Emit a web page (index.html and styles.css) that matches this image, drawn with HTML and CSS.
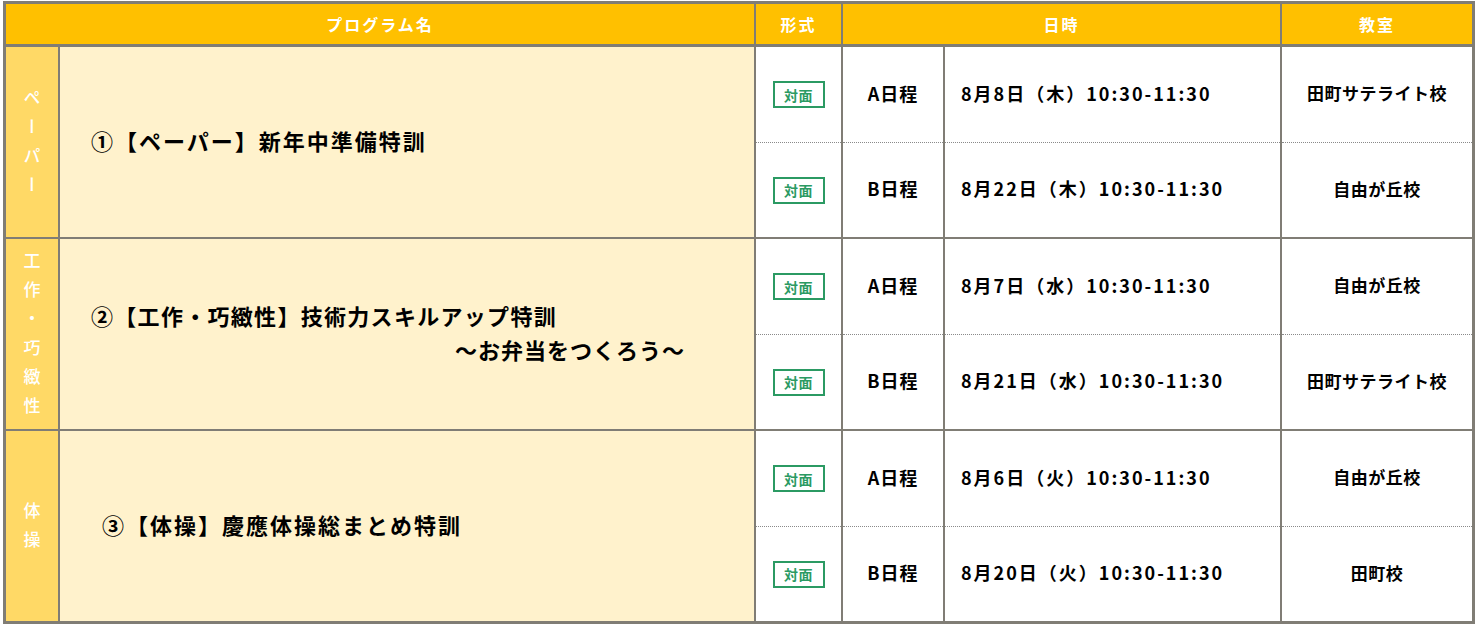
FILE: index.html
```html
<!DOCTYPE html>
<html lang="ja">
<head>
<meta charset="utf-8">
<title>特訓プログラム</title>
<link rel="stylesheet" href="styles.css">
</head>
<body>
<div class="schedule">
  <div class="hd hd-name">プログラム名</div>
  <div class="hd">形式</div>
  <div class="hd hd-date">日時</div>
  <div class="hd">教室</div>

  <div class="cat"><span class="cat-text">ペーパー</span></div>
  <div class="prog prog-1"><p class="title">①【ペーパー】新年中準備特訓</p></div>
  <div class="col"><div class="half"><span class="badge">対面</span></div><div class="half"><span class="badge">対面</span></div></div>
  <div class="col label"><div class="half">A日程</div><div class="half">B日程</div></div>
  <div class="col date"><div class="half">8月8日（木）10:30-11:30</div><div class="half">8月22日（木）10:30-11:30</div></div>
  <div class="col room"><div class="half">田町サテライト校</div><div class="half">自由が丘校</div></div>

  <div class="cat"><span class="cat-text">工作・巧緻性</span></div>
  <div class="prog prog-2"><p class="title title-long">②【工作・巧緻性】技術力スキルアップ特訓</p><p class="title sub">〜お弁当をつくろう〜</p></div>
  <div class="col"><div class="half"><span class="badge">対面</span></div><div class="half"><span class="badge">対面</span></div></div>
  <div class="col label"><div class="half">A日程</div><div class="half">B日程</div></div>
  <div class="col date"><div class="half">8月7日（水）10:30-11:30</div><div class="half">8月21日（水）10:30-11:30</div></div>
  <div class="col room"><div class="half">自由が丘校</div><div class="half">田町サテライト校</div></div>

  <div class="cat"><span class="cat-text">体操</span></div>
  <div class="prog prog-3"><p class="title">③【体操】慶應体操総まとめ特訓</p></div>
  <div class="col"><div class="half"><span class="badge">対面</span></div><div class="half"><span class="badge">対面</span></div></div>
  <div class="col label"><div class="half">A日程</div><div class="half">B日程</div></div>
  <div class="col date"><div class="half">8月6日（火）10:30-11:30</div><div class="half">8月20日（火）10:30-11:30</div></div>
  <div class="col room"><div class="half">自由が丘校</div><div class="half">田町校</div></div>
</div>
</body>
</html>
```
FILE: styles.css
```css
* { box-sizing: border-box; }
html, body { background: #ffffff; }
body {
  margin: 1px 0 0 3px;
  font-family: "Noto Sans CJK JP", "Noto Sans", sans-serif;
  color: #111;
}
.schedule {
  display: grid;
  grid-template-columns: 52px 694px 85px 100px 335px 190px;
  grid-template-rows: 41px 190px 190px 190px;
  gap: 2px;
  width: 1472px;
  background: #807d75;
  border: 3px solid #807d75;
}
.hd {
  background: #ffc000;
  color: #fff;
  font-weight: 700;
  font-size: 16px;
  letter-spacing: 2px;
  display: flex;
  align-items: center;
  justify-content: center;
  margin-bottom: 1px;
  padding-bottom: 1px;
}
.hd-name { grid-column: span 2; }
.hd-date { grid-column: span 2; }
.cat {
  background: #ffd966;
  display: flex;
  align-items: center;
  justify-content: center;
}
.cat-text {
  writing-mode: vertical-rl;
  color: #fff;
  font-size: 17px;
  font-weight: 500;
  letter-spacing: 12px;
  padding-top: 10px;
}
.prog {
  background: #fff2cc;
  display: flex;
  flex-direction: column;
  justify-content: center;
  padding-left: 31px;
  padding-bottom: 4px;
}
.prog-3 { padding-left: 42px; }
.title {
  margin: 0;
  font-size: 22px;
  font-weight: 700;
  letter-spacing: 2px;
  line-height: 34px;
  color: #000;
}
.title-long { letter-spacing: 1.3px; }
.sub { margin-left: 364px; letter-spacing: 1px; }
.col {
  background: #fff;
  display: flex;
  flex-direction: column;
}
.half {
  display: flex;
  align-items: center;
  justify-content: center;
  height: 94px;
  padding-bottom: 4px;
  font-weight: 700;
  color: #000;
}
.half:first-child {
  height: 96px;
  border-bottom: 1px dotted #8a8a8a;
}
.badge {
  display: inline-flex;
  align-items: center;
  justify-content: center;
  width: 52px;
  height: 27px;
  margin-top: 4px;
  border: 2px solid #2b9a63;
  color: #2b9a63;
  font-size: 14px;
  font-weight: 700;
  letter-spacing: 0.5px;
}
.label .half { font-size: 18px; letter-spacing: 1px; }
.date .half {
  justify-content: flex-start;
  padding-left: 16px;
  font-size: 18px;
  letter-spacing: 2px;
}
.room .half { font-size: 17px; letter-spacing: 0.5px; }
```
